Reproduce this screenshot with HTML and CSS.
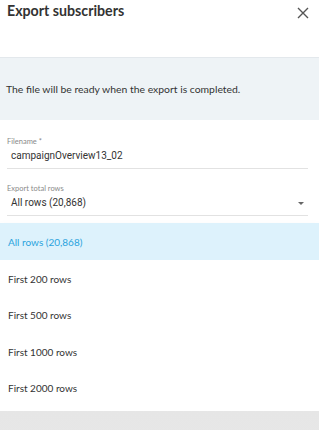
FILE: index.html
```html
<!DOCTYPE html>
<html lang="en">
<head>
    <meta charset="UTF-8">
    <meta name="viewport" content="width=device-width, initial-scale=1.0">
    <title>Export subscribers</title>
    <link rel="stylesheet" href="styles.css">
</head>
<body>
    <div class="modal">
        <div class="modal-header">
            <h2>Export subscribers</h2>
            <button class="close-btn" aria-label="Close">
                <svg width="12" height="12" viewBox="0 0 12 12">
                    <path d="M1 1 L11 11 M11 1 L1 11" stroke="#555" stroke-width="1.4" fill="none"/>
                </svg>
            </button>
        </div>
        <div class="info">The file will be ready when the export is completed.</div>
        <div class="form">
            <div class="field">
                <label>Filename *</label>
                <div class="value">campaignOverview13_02</div>
            </div>
            <div class="field">
                <label>Export total rows</label>
                <div class="value select">
                    All rows (20,868)
                    <span class="caret"></span>
                </div>
            </div>
        </div>
        <ul class="menu">
            <li class="active">All rows (20,868)</li>
            <li>First 200 rows</li>
            <li>First 500 rows</li>
            <li>First 1000 rows</li>
            <li>First 2000 rows</li>
        </ul>
    </div>
</body>
</html>
```

FILE: styles.css
```css
body {
    margin: 0;
    background: linear-gradient(#e6e6e6, #f5f5f5);
    font-family: Lato, 'Open Sans', sans-serif;
    color: #333;
}
.modal {
    background: #fff;
}
.modal-header {
    display: flex;
    justify-content: space-between;
    align-items: flex-start;
    height: 57px;
    padding: 0 10px 0 7px;
}
.modal-header h2 {
    margin: 0;
    padding-top: 2px;
    font-size: 14.2px;
    font-weight: 700;
    color: #333;
}
.close-btn {
    background: none;
    border: none;
    padding: 0;
    margin-top: 7px;
    cursor: pointer;
}
.info {
    background: #eef3f6;
    border-top: 1px solid #e3e8ec;
    height: 62px;
    padding: 0 6px;
    display: flex;
    align-items: center;
    font-size: 10.4px;
    color: #333;
}
.form {
    padding: 17px 11px 7px 7px;
    display: flex;
    flex-direction: column;
    gap: 15px;
}
.field label {
    display: block;
    font-size: 7.5px;
    color: #8a8a8a;
    margin-bottom: 3px;
}
.field .value {
    font-family: Roboto, sans-serif;
    font-size: 10px;
    line-height: 14px;
    color: #333;
    padding: 0 0 5px 4px;
    border-bottom: 1px solid #e2e2e2;
}
.select {
    display: flex;
    justify-content: space-between;
    align-items: center;
}
.caret {
    width: 0;
    height: 0;
    border-left: 3px solid transparent;
    border-right: 3px solid transparent;
    border-top: 3px solid #666;
    margin-right: 4px;
}
.menu {
    list-style: none;
    margin: 0;
    padding: 0 0 5px;
    background: #fff;
    box-shadow: 0 4px 10px rgba(0,0,0,0.05);
}
.menu li {
    height: 36.6px;
    line-height: 38px;
    padding: 0 8px;
    font-size: 10px;
    color: #333;
}
.menu li.active {
    background: #ddf2fc;
    color: #2aa3dc;
}
```
